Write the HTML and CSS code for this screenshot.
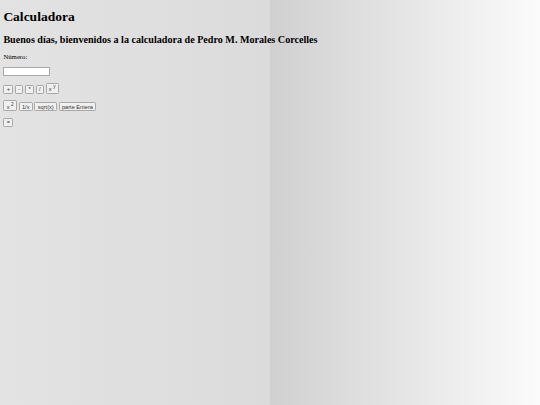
FILE: index.html
```html
<!DOCTYPE html>
<html lang="es">
<head>
<meta charset="utf-8">
<title>Calculadora</title>
<link rel="stylesheet" href="styles.css">
</head>
<body>
<div class="page">
  <h1>Calculadora</h1>
  <h2>Buenos días, bienvenidos a la calculadora de Pedro M. Morales Corcelles</h2>
  <p>Número:</p>
  <p><input type="text" class="num"></p>
  <p>
    <button class="btn">+</button>
    <button class="btn">-</button>
    <button class="btn">*</button>
    <button class="btn">/</button>
    <button class="btn">x <sup>y</sup></button>
  </p>
  <p>
    <button class="btn">x <sup>2</sup></button>
    <button class="btn">1/x</button>
    <button class="btn">sqrt(x)</button>
    <button class="btn">parte Entera</button>
  </p>
  <p><button class="btn">=</button></p>
</div>
</body>
</html>
```
FILE: styles.css
```css
html {
  height: 100%;
  background: linear-gradient(to right, #e3e3e3 0%, #dbdbdb 50%, #d0d0d0 50%, #fbfbfb 100%);
}
body {
  margin: 0;
}
.page {
  zoom: 0.421875;
  margin: 8px;
  font-family: "Liberation Serif", serif;
  color: #000;
}
.btn, .num {
  font-family: "Liberation Sans", Arial, sans-serif;
  font-size: 13.333px;
}
.btn {
  background: #f0f0f0;
  color: #333;
  border: 2px solid #a8a8a8;
  border-radius: 3px;
  padding: 1px 5.5px;
}
.num {
  width: 101px;
  background: #fff;
  border: 2px solid #a8a8a8;
  padding: 1px 2px;
}
```
